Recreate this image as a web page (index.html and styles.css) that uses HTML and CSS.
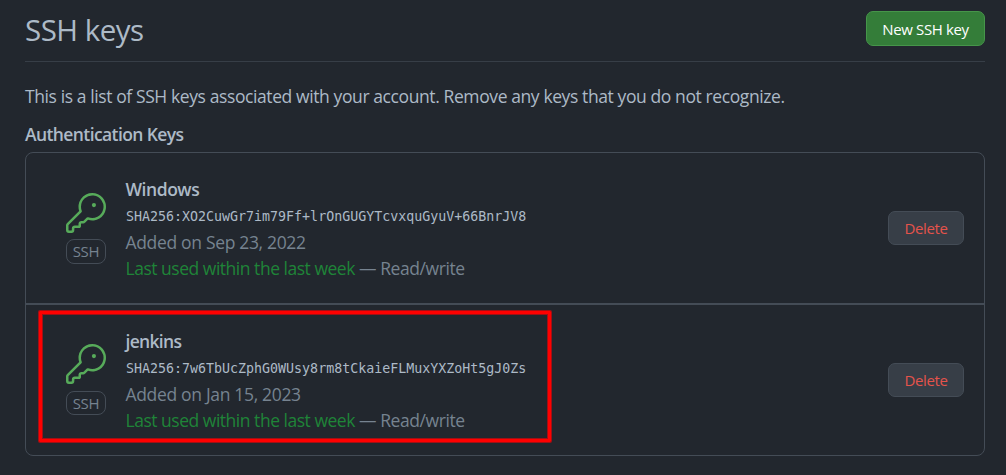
FILE: index.html
```html
<!DOCTYPE html>
<html lang="en">
<head>
<meta charset="utf-8">
<title>SSH keys</title>
<link rel="stylesheet" href="styles.css">
</head>
<body>
<svg width="0" height="0" class="defs" aria-hidden="true">
  <symbol id="key" viewBox="0 0 24 24">
    <path d="M16.75 8.5a1.25 1.25 0 1 0 0-2.5 1.25 1.25 0 0 0 0 2.5Z"/>
    <path d="M15.75 0a8.25 8.25 0 1 1-2.541 16.101l-1.636 1.636a1.744 1.744 0 0 1-1.237.513H9.25a.25.25 0 0 0-.25.25v1.448a.876.876 0 0 1-.256.619l-.214.213a.75.75 0 0 1-.545.22H5.25a.25.25 0 0 0-.25.25v1A1.75 1.75 0 0 1 3.25 24h-1.5A1.75 1.75 0 0 1 0 22.25v-2.836c0-.464.185-.908.513-1.236l7.386-7.388A8.249 8.249 0 0 1 15.75 0ZM9 8.25a6.733 6.733 0 0 0 .463 2.462.75.75 0 0 1-.168.804l-7.722 7.721a.25.25 0 0 0-.073.177v2.836c0 .138.112.25.25.25h1.5a.25.25 0 0 0 .25-.25v-1c0-.966.784-1.75 1.75-1.75H7.5v-1c0-.966.784-1.75 1.75-1.75h1.086a.25.25 0 0 0 .177-.073l1.971-1.972a.75.75 0 0 1 .804-.168A6.75 6.75 0 1 0 9 8.25Z"/>
  </symbol>
</svg>
<main class="page">
  <header class="subhead">
    <h1 class="title">SSH keys</h1>
    <button class="btn btn-primary"><span>New SSH key</span></button>
  </header>
  <p class="intro"><span>This is a list of SSH keys associated with your account. Remove any keys that you do not recognize.</span></p>
  <h2 class="section"><span>Authentication Keys</span></h2>
  <ul class="list">
    <li class="row row-first">
      <div class="kind">
        <svg class="icon"><use href="#key"/></svg>
        <span class="label">SSH</span>
      </div>
      <div class="details">
        <strong class="name">Windows</strong>
        <code class="hash">SHA256:XO2CuwGr7im79Ff+lrOnGUGYTcvxquGyuV+66BnrJV8</code>
        <span class="added">Added on Sep 23, 2022</span>
        <span class="used"><span class="recent">Last used within the last week</span> — Read/write</span>
      </div>
      <button class="btn btn-danger"><span>Delete</span></button>
    </li>
    <li class="row">
      <div class="kind">
        <svg class="icon"><use href="#key"/></svg>
        <span class="label">SSH</span>
      </div>
      <div class="details">
        <strong class="name name-tight">jenkins</strong>
        <code class="hash">SHA256:7w6TbUcZphG0WUsy8rm8tCkaieFLMuxYXZoHt5gJ0Zs</code>
        <span class="added">Added on Jan 15, 2023</span>
        <span class="used"><span class="recent">Last used within the last week</span> — Read/write</span>
      </div>
      <button class="btn btn-danger"><span>Delete</span></button>
      <div class="marker"></div>
    </li>
  </ul>
</main>
</body>
</html>
```

FILE: styles.css
```css
* { box-sizing: border-box; }
body {
  margin: 0;
  height: 475px;
  overflow: hidden;
  background: #22272e;
  color: #adbac7;
  font: 17.5px/26px "Open Sans", "Noto Sans", sans-serif;
}
.defs { position: absolute; }
.page { padding: 0 21px 0 25px; }
.subhead {
  display: flex;
  justify-content: space-between;
  align-items: flex-start;
  height: 62px;
  border-bottom: 1px solid #373e47;
}
.title {
  margin: 11px 0 0;
  font-size: 29.5px;
  line-height: 38px;
  font-weight: 400;
  letter-spacing: -0.5px;
}
.btn {
  flex: none;
  height: 34px;
  padding: 0;
  border: 1px solid #444c56;
  border-radius: 7px;
  font: 15px/32px "Open Sans", "Noto Sans", sans-serif;
  letter-spacing: -0.38px;
  white-space: nowrap;
}
.btn-primary {
  width: 119px;
  height: 35px;
  margin-top: 11px;
  background: #347d39;
  border-color: #46954a;
  color: #fff;
}
.btn-danger {
  width: 76px;
  margin-top: 34px;
  background: #373e47;
  color: #e5534b;
}
.intro {
  margin: 21px 0 0;
  white-space: nowrap;
  letter-spacing: -0.4px;
}
.section {
  margin: 12px 0 0;
  font-size: 17.5px;
  line-height: 26px;
  font-weight: 600;
  letter-spacing: -0.6px;
}
.list {
  margin: 5px 0 0;
  padding: 0;
  list-style: none;
  height: 304px;
  border: 1px solid #444c56;
  border-radius: 8px;
}
.row {
  position: relative;
  display: flex;
  height: 152px;
  padding: 23px 20px 0 40px;
  border-bottom: 2px solid #444c56;
}
.row:last-child { border-bottom: 0; }
.kind {
  width: 40px;
  margin: 16px 19.5px 0 0;
  display: flex;
  flex-direction: column;
}
.icon {
  width: 40px;
  height: 40px;
  fill: #57ab5a;
}
.label {
  height: 24px;
  margin-top: 7px;
  border: 1px solid #444c56;
  border-radius: 8px;
  font-size: 15px;
  line-height: 22px;
  text-align: center;
  color: #768390;
  letter-spacing: -0.3px;
}
.row-first .kind { margin-top: 17px; }
.row-first .label {
  height: 25px;
  margin-top: 6px;
}
.row .btn { margin-top: 35px; }
.details {
  flex: 1;
  display: flex;
  flex-direction: column;
  align-items: flex-start;
  white-space: nowrap;
  color: #768390;
  letter-spacing: -0.42px;
}
.name {
  color: #adbac7;
  font-weight: 600;
  letter-spacing: -0.45px;
}
.name-tight { letter-spacing: -0.7px; }
.hash {
  margin: 2px 0 -1px 0.5px;
  font: 13.3px/26px "DejaVu Sans Mono", monospace;
  letter-spacing: 0;
  color: #adbac7;
}
.added { letter-spacing: -0.33px; }
.recent {
  color: #1f8438;
  letter-spacing: -0.48px;
}
.marker {
  position: absolute;
  left: 13px;
  top: 6px;
  width: 512px;
  height: 131px;
  border: 3px solid #f00;
  border-radius: 1px;
  box-shadow: 0 0 0 1px #a01014, inset 0 0 0 1px #a01014;
}
```
